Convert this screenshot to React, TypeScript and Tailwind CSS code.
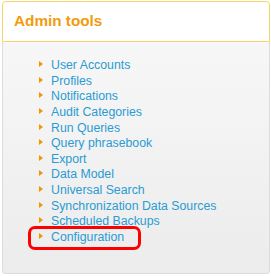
const links = [
  "User Accounts",
  "Profiles",
  "Notifications",
  "Audit Categories",
  "Run Queries",
  "Query phrasebook",
  "Export",
  "Data Model",
  "Universal Search",
  "Synchronization Data Sources",
  "Scheduled Backups",
  "Configuration",
]

function Bullet() {
  return (
    <svg width="4" height="6" viewBox="0 0 4 6" className="absolute left-[-12px] top-[3px]">
      <path d="M0 0 L4 3 L0 6 Z" fill="#f39400" />
    </svg>
  )
}

function App() {
  return (
    <div className="w-[271px] h-[276px] bg-white pt-[1px] pl-[2px] font-['Liberation_Sans',Arial,sans-serif]">
      <div className="w-[268px]">
        <div className="h-[41px] border border-[#f8d26a] rounded-t-[4px] bg-white pl-[11px] pt-[10px]">
          <h2 className="text-[15.3px] font-bold text-[#f29b0c] leading-[18px]">Admin tools</h2>
        </div>
        <div className="h-[232px] border-x border-b border-[#dcdcdc] rounded-b-[4px] bg-gradient-to-b from-[#f7f7f7] to-[#ececec] pt-[16px]">
          <ul className="pl-[48px]">
            {links.map((l) => (
              <li key={l} className="relative text-[12.3px] leading-[15.64px] text-[#2b9bd3]">
                <Bullet />
                <a href="#">{l}</a>
                {l === "Configuration" && (
                  <span className="absolute left-[-23px] top-[-4px] w-[113px] h-[24px] border-[3px] border-[#f00] rounded-[7px]" />
                )}
              </li>
            ))}
          </ul>
        </div>
      </div>
    </div>
  )
}

export default App
